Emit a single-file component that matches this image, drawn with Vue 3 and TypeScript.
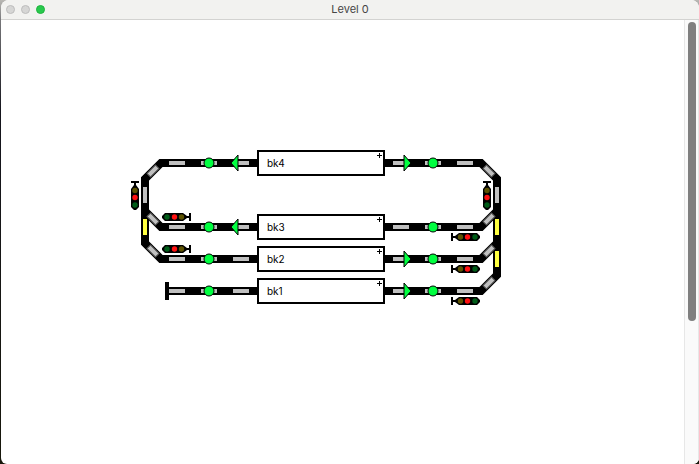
<script setup lang="ts">
interface Point { x: number; y: number }
interface Route { id: string; points: string }
interface Signal extends Point { id: string; angle: number }

const routes: Route[] = [
  { id: 'outer', points: '256,144 160,144 144,160 144,224 160,240 256,240' },
  { id: 'left-bk3', points: '256,208 160,208 144,192' },
  { id: 'siding', points: '168,272 256,272' },
  { id: 'right-main', points: '384,144 480,144 496,160 496,256 480,272 384,272' },
  { id: 'right-bk3', points: '384,208 480,208 496,192' },
  { id: 'right-bk2', points: '384,240 480,240 496,224' },
]

const rows: number[] = [144, 208, 240, 272]
const columns: number[] = [176, 208, 240, 400, 432, 464]
const verticals: Point[] = [{ x: 144, y: 176 }, { x: 496, y: 176 }]
const switches: Point[] = [{ x: 144, y: 208 }, { x: 496, y: 208 }, { x: 496, y: 240 }]

const falling: Point[] = [
  { x: 152, y: 200 }, { x: 152, y: 232 }, { x: 488, y: 152 },
]
const rising: Point[] = [
  { x: 152, y: 152 }, { x: 488, y: 200 }, { x: 488, y: 232 }, { x: 488, y: 264 },
]

const arrows: { points: string }[] = [
  { points: '230,144 237,136 237,152' },
  { points: '230,208 237,200 237,216' },
  { points: '410,144 403,136 403,152' },
  { points: '410,240 403,232 403,248' },
  { points: '410,272 403,264 403,280' },
]

const signals: Signal[] = [
  { id: 's1', x: 134, y: 179, angle: -90 },
  { id: 's2', x: 486, y: 179, angle: -90 },
  { id: 's3', x: 173, y: 198, angle: 0 },
  { id: 's4', x: 173, y: 230, angle: 0 },
  { id: 's5', x: 467, y: 218, angle: 180 },
  { id: 's6', x: 467, y: 250, angle: 180 },
  { id: 's7', x: 467, y: 282, angle: 180 },
]

const blocks: { name: string; y: number }[] = [
  { name: 'bk4', y: 144 },
  { name: 'bk3', y: 208 },
  { name: 'bk2', y: 240 },
  { name: 'bk1', y: 272 },
]
</script>

<template>
  <div class="window">
    <header class="titlebar">
      <div class="controls">
        <button class="control" type="button" aria-label="Close"></button>
        <button class="control" type="button" aria-label="Minimize"></button>
        <button class="control zoom" type="button" aria-label="Zoom"></button>
      </div>
      <h1 class="title">Level 0</h1>
    </header>
    <div class="content">
      <main class="plan">
        <svg width="512" height="320" viewBox="0 0 512 320" role="img" aria-label="Track plan">
          <g class="track">
            <polyline v-for="r in routes" :key="r.id" :points="r.points" />
          </g>
          <g class="rail" shape-rendering="crispEdges">
            <template v-for="y in rows" :key="y">
              <rect v-for="x in columns" :key="x" :x="x - 8" :y="y - 2" width="16" height="4" />
            </template>
            <rect v-for="v in verticals" :key="v.x" :x="v.x - 2" :y="v.y - 8" width="4" height="16" />
            <rect
              v-for="(s, i) in switches" :key="i" class="switch"
              :x="s.x - 2" :y="s.y - 8" width="4" height="16"
            />
          </g>
          <g class="rail diagonal">
            <rect
              v-for="(p, i) in falling" :key="i" x="-6" y="-2.5" width="12" height="5"
              :transform="`translate(${p.x} ${p.y}) rotate(45)`"
            />
            <rect
              v-for="(p, i) in rising" :key="i" x="-6" y="-2.5" width="12" height="5"
              :transform="`translate(${p.x} ${p.y}) rotate(-45)`"
            />
          </g>
          <rect x="164" y="263" width="4" height="18" />
          <g class="marker">
            <template v-for="y in rows" :key="y">
              <circle cx="208" :cy="y" r="5" />
              <circle cx="432" :cy="y" r="5" />
            </template>
            <polygon v-for="(a, i) in arrows" :key="i" :points="a.points" />
          </g>
          <g v-for="s in signals" :key="s.id" :transform="`translate(${s.x} ${s.y}) rotate(${s.angle})`">
            <path d="M-12-1-9-4H9l4 3h2v-3h2v8h-2V1h-2L9 4H-9l-3-3z" />
            <circle class="lamp-green" cx="-7" cy="0" r="2.7" />
            <circle class="lamp-red" cx="0.5" cy="0" r="2.7" />
            <circle class="lamp-yellow" cx="7.5" cy="0" r="2.7" />
          </g>
          <g v-for="b in blocks" :key="b.name">
            <rect class="block" x="257" :y="b.y - 12" width="126" height="24" />
            <path class="plus" :d="`M376 ${b.y - 7.5}h5M378.5 ${b.y - 10}v5`" shape-rendering="crispEdges" />
            <text class="name" x="266" :y="b.y + 4">{{ b.name }}</text>
          </g>
        </svg>
      </main>
      <div class="scrollbar"><div class="thumb"></div></div>
    </div>
  </div>
</template>

<style>
body {
  background: linear-gradient(#b9b8b4 0, #77777a 20px, #15151d 110px, #17170b 464px);
}
</style>

<style scoped>
.window {
  display: flex;
  flex-direction: column;
  box-sizing: border-box;
  height: 100vh;
  margin-left: 1px;
  overflow: hidden;
  border-radius: 8px 8px 6px 6px;
  background: #fff;
  font-family: Inter, "Liberation Sans", sans-serif;
}

.titlebar {
  display: grid;
  grid-template-columns: 1fr auto 1fr;
  align-items: center;
  box-sizing: border-box;
  flex: none;
  height: 20px;
  border-bottom: 1px solid #d3d3d1;
  background: #f2f2f0;
}

.controls {
  display: flex;
  gap: 6px;
  padding-left: 5px;
}

.control {
  box-sizing: border-box;
  width: 9px;
  height: 9px;
  padding: 0;
  border: 1px solid #bdbdbc;
  border-radius: 50%;
  background: #d6d6d5;
}

.zoom {
  border-color: #20b33f;
  background: #28c94d;
}

.title {
  align-self: start;
  margin: 0;
  color: #454545;
  font-size: 11px;
  font-weight: 400;
  line-height: 18px;
}

.content {
  display: flex;
  flex: 1;
  min-height: 0;
}

.plan {
  flex: 1;
  min-width: 0;
  overflow: hidden;
}

.plan svg {
  display: block;
  margin-top: -1px;
}

.track {
  fill: none;
  stroke: #000;
  stroke-width: 8;
}

.rail {
  fill: #c0c0c0;
}

.rail .switch {
  fill: #ffff40;
}

.diagonal {
  stroke: #555;
  stroke-width: 1;
}

.marker {
  fill: #00ff40;
  stroke: #000;
  stroke-width: 1;
}

.lamp-green {
  fill: #005c18;
}

.lamp-red {
  fill: #f11;
}

.lamp-yellow {
  fill: #5c5200;
}

.block {
  fill: #fff;
  stroke: #000;
  stroke-width: 2;
}

.plus {
  stroke: #000;
  stroke-width: 1;
}

.name {
  font-family: Inter, "Liberation Sans", sans-serif;
  font-size: 10px;
}

.scrollbar {
  box-sizing: border-box;
  flex: none;
  width: 15px;
  padding: 2px 3px;
  border-left: 1px solid #e7e7e7;
  border-right: 1px solid #e7e7e7;
  background: #fafafa;
}

.thumb {
  width: 8px;
  height: 68%;
  border-radius: 4px;
  background: #7f7f7f;
}
</style>
